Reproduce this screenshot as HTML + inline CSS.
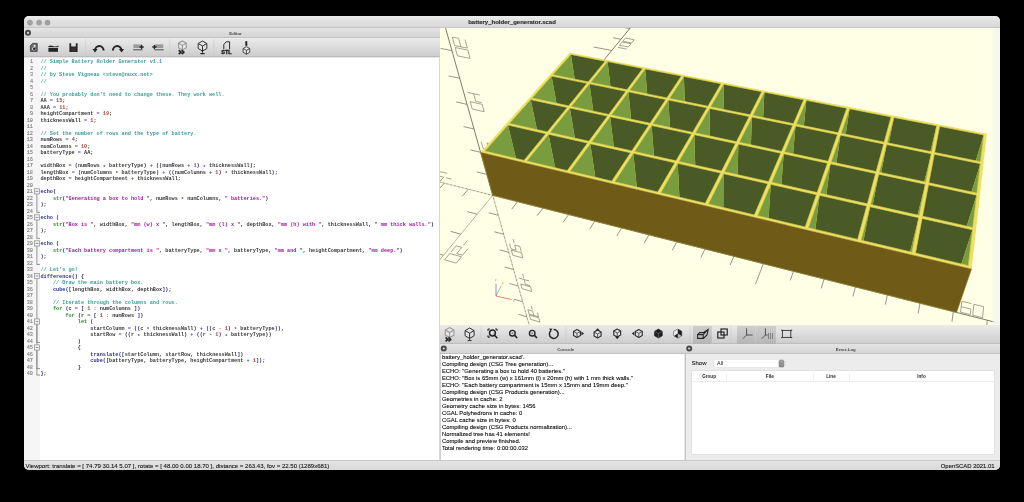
<!DOCTYPE html>
<html><head><meta charset="utf-8">
<style>
*{margin:0;padding:0;box-sizing:border-box}
html,body{width:1024px;height:502px;background:#000;overflow:hidden;font-family:"Liberation Sans",sans-serif}
#win{will-change:transform}
.abs{position:absolute}
#win{position:absolute;left:24px;top:16px;width:976px;height:453.5px;background:#e6e6e6;border-radius:5px;overflow:hidden}
#titlebar{position:absolute;left:0;top:0;width:976px;height:12px;background:linear-gradient(#ececec,#e2e2e2 35%,#d9d9d9);border-bottom:0.6px solid #c6c6c6}
.tl{position:absolute;top:3.6px;width:5.8px;height:5.8px;border-radius:50%;background:#c4c4c4;border:0.5px solid #ababab}
#title{position:absolute;left:0;top:0;width:976px;height:12px;line-height:12px;text-align:center;font-size:6px;font-weight:bold;color:#2a2a2a;-webkit-text-stroke:0.12px #2a2a2a}
.hdr{position:absolute;height:9.7px;background:linear-gradient(#e4e4e4,#d5d5d5);border-bottom:0.8px solid #c2c2c2}
.hdr .lbl{position:absolute;top:0.8px;left:7px;right:0;text-align:center;line-height:9.7px;font-size:4.3px;font-weight:bold;color:#4a4a4a}
.ring{position:absolute;width:5.4px;height:5.4px;border-radius:50%;border:1.5px solid #505050;background:#e0e0e0}
.tb{position:absolute;height:19.5px;background:linear-gradient(#ebebeb,#cdcdcd);border-bottom:0.6px solid #bdbdbd}
#code{position:absolute;left:0;top:41.7px;width:415px;height:402px;background:#fff;overflow:hidden}
#gut{position:absolute;left:0;top:0;width:15.5px;height:402px;background:#f6f6f6}
pre{font-family:"Liberation Mono",monospace;font-size:5.21px;line-height:6.506px;white-space:pre}
#nums{position:absolute;left:0;top:1.8px;width:9px;text-align:right;color:#7c7c7c;-webkit-text-stroke:0.1px #7c7c7c}
#src{position:absolute;left:16.4px;top:1.8px;color:#383838;font-weight:bold}
i{font-style:normal}
.c{color:#3c9e94}
.k{color:#2f2f9a}
.g{color:#2e8b2e}
.s{color:#a3199c}
.n{color:#a04a3c}
.o{color:#4646d8}
.a{position:relative;top:1.3px}
.b{color:#2a2a70}
#vp{position:absolute;left:416px;top:12px;width:560px;height:297.3px;background:#ffffe5;overflow:hidden}
#console{position:absolute;left:415.6px;top:337.7px;width:244.6px;height:106px;background:#fff;border-left:0.6px solid #d0d0d0}
#console pre{font-family:"Liberation Sans",sans-serif;font-size:5.9px;line-height:6.94px;color:#000;position:absolute;left:1.3px;top:0.7px;-webkit-text-stroke:0.08px #000}
#errlog{position:absolute;left:660.5px;top:337.7px;width:315.5px;height:106px;background:#ececec;border-left:0.5px solid #c4c4c4}
#status{position:absolute;left:0;top:443.5px;width:976px;height:10px;background:linear-gradient(#e3e3e3,#d9d9d9);border-top:0.5px solid #c8c8c8;font-size:6.05px;line-height:10px;color:#111;-webkit-text-stroke:0.1px #222}
</style></head><body>
<div id="win">
  <div id="titlebar">
    <div id="title">battery_holder_generator.scad</div>
  </div>
  <!-- editor -->
  <div class="hdr" style="left:0;top:12px;width:416px"><div class="lbl">Editor</div></div>
  <div class="tb" style="left:0;top:21.7px;width:416px"></div>
  <div id="code"><div id="gut"></div><pre id="nums">1
2
3
4
5
6
7
8
9
10
11
12
13
14
15
16
17
18
19
20
21
22
23
24
25
26
27
28
29
30
31
32
33
34
35
36
37
38
39
40
41
42
43
44
45
46
47
48
49</pre><pre id="src"><i class="c">// Simple Battery Holder Generator v1.1</i>
<i class="c">//</i>
<i class="c">// by Steve Vigneau &lt;steve@nuxx.net&gt;</i>
<i class="c">//</i>

<i class="c">// You probably don&#x27;t need to change these. They work well.</i>
AA <i class="o">=</i> <i class="n">15</i>;
AAA <i class="o">=</i> <i class="n">11</i>;
heightCompartment <i class="o">=</i> <i class="n">19</i>;
thicknessWall <i class="o">=</i> <i class="n">1</i>;

<i class="c">// Set the number of rows and the type of battery.</i>
numRows <i class="o">=</i> <i class="n">4</i>;
numColumns <i class="o">=</i> <i class="n">10</i>;
batteryType <i class="o">=</i> AA;

widthBox <i class="o">=</i> <i class="b">(</i>numRows <i class="o a">*</i> batteryType<i class="b">)</i> <i class="o">+</i> <i class="b">(</i><i class="b">(</i>numRows <i class="o">+</i> <i class="n">1</i><i class="b">)</i> <i class="o a">*</i> thicknessWall<i class="b">)</i>;
lengthBox <i class="o">=</i> <i class="b">(</i>numColumns <i class="o a">*</i> batteryType<i class="b">)</i> <i class="o">+</i> <i class="b">(</i><i class="b">(</i>numColumns <i class="o">+</i> <i class="n">1</i><i class="b">)</i> <i class="o a">*</i> thicknessWall<i class="b">)</i>;
depthBox <i class="o">=</i> heightCompartment <i class="o">+</i> thicknessWall;

<i class="k">echo</i><i class="b">(</i>
    <i class="g">str</i><i class="b">(</i><i class="s">&quot;Generating a box to hold &quot;</i>, numRows <i class="o a">*</i> numColumns, <i class="s">&quot; batteries.&quot;</i><i class="b">)</i>
<i class="b">)</i>;

<i class="k">echo</i> <i class="b">(</i>
    <i class="g">str</i><i class="b">(</i><i class="s">&quot;Box is &quot;</i>, widthBox, <i class="s">&quot;mm (w) x &quot;</i>, lengthBox, <i class="s">&quot;mm (l) x &quot;</i>, depthBox, <i class="s">&quot;mm (h) with &quot;</i>, thicknessWall, <i class="s">&quot; mm thick walls.&quot;</i><i class="b">)</i>
<i class="b">)</i>;

<i class="k">echo</i> <i class="b">(</i>
    <i class="g">str</i><i class="b">(</i><i class="s">&quot;Each battery compartment is &quot;</i>, batteryType, <i class="s">&quot;mm x &quot;</i>, batteryType, <i class="s">&quot;mm and &quot;</i>, heightCompartment, <i class="s">&quot;mm deep.&quot;</i><i class="b">)</i>
<i class="b">)</i>;

<i class="c">// Let&#x27;s go!</i>
<i class="k">difference</i><i class="b">(</i><i class="b">)</i> <i class="b">{</i>
    <i class="c">// Draw the main battery box.</i>
    <i class="k">cube</i><i class="b">(</i><i class="b">[</i>lengthBox, widthBox, depthBox<i class="b">]</i><i class="b">)</i>;

    <i class="c">// Iterate through the columns and rows.</i>
    <i class="g">for</i> <i class="b">(</i>c <i class="o">=</i> <i class="b">[</i> <i class="n">1</i> <i class="o">:</i> numColumns <i class="b">]</i><i class="b">)</i>
        <i class="g">for</i> <i class="b">(</i>r <i class="o">=</i> <i class="b">[</i> <i class="n">1</i> <i class="o">:</i> numRows <i class="b">]</i><i class="b">)</i>
            <i class="g">let</i> <i class="b">(</i>
                startColumn <i class="o">=</i> <i class="b">(</i><i class="b">(</i>c <i class="o a">*</i> thicknessWall<i class="b">)</i> <i class="o">+</i> <i class="b">(</i><i class="b">(</i>c <i class="o">-</i> <i class="n">1</i><i class="b">)</i> <i class="o a">*</i> batteryType<i class="b">)</i><i class="b">)</i>,
                startRow <i class="o">=</i> <i class="b">(</i><i class="b">(</i>r <i class="o a">*</i> thicknessWall<i class="b">)</i> <i class="o">+</i> <i class="b">(</i><i class="b">(</i>r <i class="o">-</i> <i class="n">1</i><i class="b">)</i> <i class="o a">*</i> batteryType<i class="b">)</i><i class="b">)</i>
            <i class="b">)</i>
            <i class="b">{</i>
                <i class="k">translate</i><i class="b">(</i><i class="b">[</i>startColumn, startRow, thicknessWall<i class="b">]</i><i class="b">)</i>
                <i class="k">cube</i><i class="b">(</i><i class="b">[</i>batteryType, batteryType, heightCompartment <i class="o">+</i> <i class="n">1</i><i class="b">]</i><i class="b">)</i>;
            <i class="b">}</i>
<i class="b">}</i>;</pre></div>
  <div class="abs" style="left:415px;top:41.7px;width:1px;height:402px;background:#d8d8d8"></div>
  <!-- viewport -->
  <div id="vp"><svg width="560" height="298" viewBox="440 28 560 298" style="position:absolute;left:0;top:0"><path d="M492.71 195.36 L1344.13 410.27 M492.71 195.36 L725.91 -88.48 M492.71 195.36 L34.28 -1431.75 " stroke="#5a5a50" stroke-width="0.8" fill="none"/><path d="M492.71 195.36 L-31.06 63.16 M492.71 195.36 L-849.40 1828.85 M492.71 195.36 L583.58 517.89 " stroke="#5a5a50" stroke-width="0.8" fill="none" stroke-dasharray="0.8 0.6"/><path d="M517.55 201.63 L511.67 209.19 M507.40 177.48 L497.79 175.13 M486.80 174.39 L476.75 171.93 M542.85 208.02 L537.19 215.72 M521.35 160.50 L511.93 158.27 M480.58 152.30 L470.29 149.85 M568.63 214.52 L563.20 222.37 M534.60 144.37 L525.38 142.25 M474.01 128.99 L463.46 126.57 M594.88 221.15 L589.70 229.14 M547.22 129.01 L538.17 126.99 M467.07 104.37 L456.26 101.98 M621.64 227.90 L616.71 236.05 M559.24 114.38 L550.37 112.45 M459.73 78.31 L448.63 75.96 M648.90 234.78 L644.23 243.09 M570.71 100.42 L562.00 98.58 M451.95 50.70 L440.55 48.39 M676.69 241.80 L672.30 250.27 M581.66 87.10 L573.12 85.34 M443.69 21.37 L431.98 19.12 M705.03 248.95 L700.92 257.58 M592.13 74.35 L583.74 72.67 M434.90 -9.82 L422.86 -12.00 M733.92 256.24 L730.11 265.05 M602.15 62.16 L593.91 60.55 M425.53 -43.07 L413.14 -45.17 M763.39 263.68 L755.41 284.20 M611.74 50.48 L593.61 47.02 M415.53 -78.59 L386.98 -83.05 M793.45 271.27 L790.28 280.43 M620.94 39.28 L612.99 37.80 M404.81 -116.60 L391.66 -118.48 M824.11 279.01 L821.29 288.36 M629.77 28.54 L621.96 27.12 M393.32 -157.40 L379.74 -159.13 M855.41 286.91 L852.94 296.46 M638.25 18.22 L630.57 16.86 M380.95 -201.29 L366.93 -202.85 M887.36 294.97 L885.25 304.72 M646.39 8.31 L638.84 6.99 M367.61 -248.64 L353.12 -249.99 M919.97 303.20 L918.25 313.16 M654.23 -1.23 L646.80 -2.49 M353.18 -299.87 L338.17 -300.99 M953.27 311.61 L951.96 321.78 M661.77 -10.41 L654.46 -11.63 M337.51 -355.49 L321.96 -356.32 M987.29 320.20 L986.40 330.58 M669.04 -19.26 L661.85 -20.43 M320.44 -416.09 L304.30 -416.56 M1022.04 328.97 L1021.59 339.58 M676.04 -27.78 L668.96 -28.91 M301.77 -482.35 L285.01 -482.41 M1057.55 337.93 L1057.55 348.78 M682.80 -36.00 L675.83 -37.09 M281.26 -555.12 L263.83 -554.68 M1093.84 347.09 L1094.95 372.46 M689.32 -43.94 L673.92 -46.30 M258.64 -635.41 L218.15 -633.07 M1130.95 356.46 L1131.93 367.80 M695.62 -51.60 L688.85 -52.62 M233.56 -724.44 L214.61 -722.65 M1168.89 366.03 L1170.40 377.63 M701.70 -59.01 L695.04 -59.99 M205.59 -823.72 L185.78 -821.02 M1207.70 375.83 L1209.76 387.70 M707.58 -66.17 L701.02 -67.12 M174.20 -935.13 L153.47 -931.30 M1247.41 385.85 L1250.04 398.00 M713.28 -73.10 L706.80 -74.02 M138.73 -1061.04 L116.98 -1055.81 M468.31 189.20 L462.00 196.49 M477.21 214.22 L467.19 211.61 M498.32 215.29 L488.73 212.80 M444.34 183.15 L437.84 190.31 M460.84 234.15 L450.59 231.39 M503.67 234.26 L494.29 231.76 M420.80 177.21 L414.11 184.24 M443.51 255.24 L433.04 252.31 M508.76 252.33 L499.58 249.83 M397.67 171.37 L390.79 178.28 M425.15 277.58 L414.44 274.48 M513.61 269.56 L504.64 267.07 M374.94 165.63 L367.89 172.42 M405.66 301.31 L394.70 298.01 M518.25 286.02 L509.46 283.54 M352.59 159.99 L345.38 166.67 M384.92 326.55 L373.70 323.04 M522.69 301.76 L514.07 299.28 M330.63 154.45 L323.25 161.01 M362.82 353.44 L351.34 349.70 M526.93 316.82 L518.49 314.34 M309.04 149.00 L301.51 155.45 M339.22 382.17 L327.46 378.16 M530.99 331.24 L522.72 328.77 M287.81 143.64 L280.13 149.98 M313.96 412.91 L301.90 408.62 M534.88 345.06 L526.77 342.60 M266.93 138.37 L249.11 152.58 M286.86 445.90 L259.21 435.60 M538.62 358.32 L520.77 352.84 M246.40 133.19 L238.44 139.32 M257.70 481.38 L245.03 476.42 M542.21 371.06 L534.40 368.63 M226.20 128.09 L218.11 134.12 M226.26 519.66 L213.25 514.30 M545.66 383.30 L537.99 380.88 M206.32 123.07 L198.11 129.01 M192.23 561.07 L178.88 555.27 M548.98 395.08 L541.44 392.67 M186.77 118.14 L178.43 123.98 M155.30 606.01 L141.60 599.71 M552.17 406.41 L544.77 404.02 M167.53 113.28 L159.08 119.03 M115.08 654.97 L101.01 648.09 M555.25 417.33 L547.97 414.95 M148.59 108.50 L140.03 114.16 M71.11 708.49 L56.66 700.96 M558.21 427.85 L551.06 425.49 M129.95 103.80 L121.28 109.36 M22.82 767.26 L7.99 758.97 M561.07 438.00 L554.04 435.65 M111.60 99.16 L102.83 104.65 M-30.43 832.08 L-45.66 822.92 M563.83 447.79 L556.91 445.46 M93.53 94.60 L84.66 100.00 M-89.47 903.93 L-105.08 893.75 M566.49 457.25 L559.69 454.94 M75.74 90.11 L55.34 102.21 M-155.29 984.04 L-190.93 958.68 M569.07 466.39 L554.04 461.25 M58.22 85.69 L49.17 90.92 M-229.11 1073.89 L-245.47 1061.09 M571.56 475.23 L564.97 472.95 M40.96 81.33 L31.82 86.49 M-312.52 1175.40 L-329.20 1160.90 M573.97 483.78 L567.48 481.52 M23.97 77.04 L14.74 82.12 M-407.48 1290.99 L-424.43 1274.41 M576.30 492.05 L569.91 489.81 M7.22 72.82 L-2.08 77.82 M-516.60 1423.80 L-533.71 1404.67 M578.56 500.07 L572.26 497.84 " stroke="#6a6a60" stroke-width="0.7" fill="none"/><path d="M545.84 197.87 L553.16 199.69 M553.16 199.69 L550.16 203.80 M550.16 203.80 L542.80 201.96 M542.80 201.96 L539.73 206.10 M539.73 206.10 L547.13 207.97 M537.34 161.33 L541.14 156.55 M541.14 156.55 L535.95 155.34 M535.95 155.34 L532.12 160.09 M532.12 160.09 L526.91 158.87 M526.91 158.87 L530.78 154.13 M494.63 151.14 L492.85 144.43 M492.85 144.43 L487.04 143.07 M487.04 143.07 L488.86 149.78 M488.86 149.78 L483.13 148.43 M483.13 148.43 L481.26 141.72 M548.92 208.42 L556.37 210.29 M556.37 210.29 L562.31 201.96 M562.31 201.96 L554.94 200.13 M554.94 200.13 L548.92 208.42 M531.70 152.99 L535.49 148.34 M535.49 148.34 L545.78 150.72 M545.78 150.72 L542.05 155.41 M542.05 155.41 L531.70 152.99 M485.40 156.61 L483.57 150.03 M483.57 150.03 L495.05 152.75 M495.05 152.75 L496.80 159.33 M496.80 159.33 L485.40 156.61 M597.15 210.62 L594.37 214.87 M594.37 214.87 L602.01 216.78 M562.47 129.76 L557.45 128.64 M557.45 128.64 L560.93 124.33 M481.76 102.57 L475.70 101.24 M475.70 101.24 L473.67 93.74 M604.75 212.51 L599.23 221.10 M565.91 125.43 L555.96 123.24 M479.78 95.06 L467.59 92.42 M601.09 221.57 L608.82 223.51 M608.82 223.51 L614.24 214.87 M614.24 214.87 L606.59 212.96 M606.59 212.96 L601.09 221.57 M556.79 122.21 L560.24 117.99 M560.24 117.99 L570.12 120.15 M570.12 120.15 L566.74 124.40 M566.74 124.40 L556.79 122.21 M472.20 109.06 L470.16 101.71 M470.16 101.71 L482.24 104.37 M482.24 104.37 L484.19 111.72 M484.19 111.72 L472.20 109.06 M658.29 225.81 L650.40 223.85 M650.40 223.85 L645.36 232.72 M645.36 232.72 L653.33 234.73 M653.33 234.73 L655.83 230.24 M655.83 230.24 L647.90 228.26 M588.42 97.17 L585.28 101.10 M585.28 101.10 L575.65 99.07 M575.65 99.07 L578.84 95.16 M578.84 95.16 L583.62 96.16 M583.62 96.16 L580.46 100.09 M465.10 39.65 L467.34 48.10 M467.34 48.10 L454.58 45.55 M454.58 45.55 L452.24 37.12 M452.24 37.12 L458.66 38.38 M458.66 38.38 L460.94 46.82 M655.26 235.22 L663.29 237.24 M663.29 237.24 L668.14 228.26 M668.14 228.26 L660.20 226.29 M660.20 226.29 L655.26 235.22 M579.60 94.23 L582.74 90.38 M582.74 90.38 L592.25 92.35 M592.25 92.35 L589.17 96.22 M589.17 96.22 L579.60 94.23 M457.43 55.82 L455.14 47.56 M455.14 47.56 L467.88 50.12 M467.88 50.12 L470.07 58.39 M470.07 58.39 L457.43 55.82 M701.26 246.81 L709.54 248.90 M709.54 248.90 L713.89 239.63 M713.89 239.63 L705.70 237.59 M705.70 237.59 L701.26 246.81 M596.81 73.12 L599.72 69.54 M599.72 69.54 L608.95 71.37 M608.95 71.37 L606.08 74.97 M606.08 74.97 L596.81 73.12 M437.55 -15.81 L434.90 -25.37 M434.90 -25.37 L448.52 -22.99 M448.52 -22.99 L451.05 -13.40 M451.05 -13.40 L437.55 -15.81 M703.49 242.17 L711.73 244.23 M601.44 74.04 L604.33 70.46 M444.29 -14.61 L441.69 -24.18 M711.55 249.40 L719.89 251.50 M719.89 251.50 L724.13 242.17 M724.13 242.17 L715.88 240.12 M715.88 240.12 L711.55 249.40 M600.42 68.69 L603.29 65.17 M603.29 65.17 L612.46 66.97 M612.46 66.97 L609.64 70.51 M609.64 70.51 L600.42 68.69 M440.78 -4.19 L438.19 -13.53 M438.19 -13.53 L451.66 -11.12 M451.66 -11.12 L454.14 -1.75 M454.14 -1.75 L440.78 -4.19 M764.53 262.75 L768.26 253.14 M617.79 47.37 L626.71 49.06 M416.37 -92.14 L430.78 -89.96 M770.07 264.15 L778.75 266.34 M778.75 266.34 L782.32 256.63 M782.32 256.63 L773.74 254.50 M773.74 254.50 L770.07 264.15 M619.50 45.28 L622.13 42.05 M622.13 42.05 L630.98 43.70 M630.98 43.70 L628.39 46.96 M628.39 46.96 L619.50 45.28 M421.87 -72.35 L418.91 -83.00 M418.91 -83.00 L433.21 -80.80 M433.21 -80.80 L436.04 -70.11 M436.04 -70.11 L421.87 -72.35 M780.85 266.87 L789.60 269.07 M789.60 269.07 L793.04 259.29 M793.04 259.29 L784.40 257.15 M784.40 257.15 L780.85 266.87 M622.77 41.27 L625.36 38.09 M625.36 38.09 L634.15 39.72 M634.15 39.72 L631.60 42.92 M631.60 42.92 L622.77 41.27 M425.46 -59.40 L422.57 -69.81 M422.57 -69.81 L436.71 -67.56 M436.71 -67.56 L439.48 -57.12 M439.48 -57.12 L425.46 -59.40 M825.21 278.04 L828.22 268.04 M635.48 25.68 L644.09 27.24 M393.87 -173.24 L409.22 -171.37 M833.92 269.45 L842.85 271.67 M842.85 271.67 L841.44 276.69 M841.44 276.69 L832.46 274.44 M832.46 274.44 L830.97 279.50 M830.97 279.50 L840.01 281.77 M645.63 25.29 L648.02 22.30 M648.02 22.30 L643.74 21.53 M643.74 21.53 L641.33 24.52 M641.33 24.52 L637.05 23.75 M637.05 23.75 L639.48 20.77 M415.29 -148.47 L412.02 -160.80 M412.02 -160.80 L404.39 -161.75 M404.39 -161.75 L407.72 -149.45 M407.72 -149.45 L400.20 -150.43 M400.20 -150.43 L396.80 -162.70 M842.20 282.33 L851.30 284.62 M851.30 284.62 L854.00 274.44 M854.00 274.44 L845.01 272.21 M845.01 272.21 L842.20 282.33 M640.06 20.06 L642.45 17.12 M642.45 17.12 L650.94 18.62 M650.94 18.62 L648.59 21.58 M648.59 21.58 L640.06 20.06 M404.33 -135.54 L401.01 -147.50 M401.01 -147.50 L416.06 -145.53 M416.06 -145.53 L419.24 -133.53 M419.24 -133.53 L404.33 -135.54 M888.39 293.97 L890.63 283.54 M651.79 5.66 L660.12 7.10 M367.76 -267.35 L384.18 -265.93 M896.56 285.02 L895.49 290.21 M895.49 290.21 L904.84 292.55 M661.54 5.31 L657.39 4.59 M657.39 4.59 L659.61 1.83 M391.26 -239.22 L383.17 -240.00 M383.17 -240.00 L379.28 -254.33 M905.86 287.33 L903.81 297.85 M663.75 2.54 L655.49 1.13 M387.45 -253.58 L371.17 -255.06 M906.10 298.43 L915.58 300.82 M915.58 300.82 L917.48 290.21 M917.48 290.21 L908.11 287.89 M908.11 287.89 L906.10 298.43 M656.03 0.47 L658.24 -2.25 M658.24 -2.25 L666.45 -0.86 M666.45 -0.86 L664.28 1.87 M664.28 1.87 L656.03 0.47 M379.93 -223.48 L376.08 -237.37 M376.08 -237.37 L392.16 -235.80 M392.16 -235.80 L395.86 -221.84 M395.86 -221.84 L379.93 -223.48 M954.24 310.56 L955.64 299.70 M666.89 -12.86 L674.95 -11.53 M337.09 -377.87 L354.75 -377.09 M971.51 303.64 L961.82 301.23 M961.82 301.23 L960.51 312.14 M960.51 312.14 L970.33 314.61 M970.33 314.61 L970.92 309.09 M970.92 309.09 L961.17 306.65 M678.32 -15.76 L676.27 -13.19 M676.27 -13.19 L668.24 -14.51 M668.24 -14.51 L670.32 -17.07 M670.32 -17.07 L674.31 -16.42 M674.31 -16.42 L672.25 -13.85 M358.61 -362.49 L363.10 -345.54 M363.10 -345.54 L345.79 -346.52 M345.79 -346.52 L341.12 -363.37 M341.12 -363.37 L349.84 -362.93 M349.84 -362.93 L354.42 -346.03 M972.71 315.21 L982.60 317.71 M982.60 317.71 L983.62 306.65 M983.62 306.65 L973.86 304.22 M973.86 304.22 L972.71 315.21 M670.82 -17.68 L672.88 -20.20 M672.88 -20.20 L680.82 -18.91 M680.82 -18.91 L678.81 -16.38 M678.81 -16.38 L670.82 -17.68 M351.44 -326.17 L346.90 -342.51 M346.90 -342.51 L364.17 -341.51 M364.17 -341.51 L368.52 -325.08 M368.52 -325.08 L351.44 -326.17 M1022.94 327.87 L1023.41 316.54 M680.91 -30.06 L688.71 -28.82 M300.56 -509.52 L319.64 -509.66 M1029.48 329.52 L1039.73 332.10 M1039.73 332.10 L1039.97 320.65 M1039.97 320.65 L1029.86 318.14 M1029.86 318.14 L1029.48 329.52 M682.16 -31.59 L684.10 -33.97 M684.10 -33.97 L691.84 -32.75 M691.84 -32.75 L689.94 -30.36 M689.94 -30.36 L682.16 -31.59 M310.98 -471.97 L305.39 -492.13 M305.39 -492.13 L324.28 -492.13 M324.28 -492.13 L329.66 -471.82 M329.66 -471.82 L310.98 -471.97 M1029.67 323.79 L1039.85 326.34 M686.05 -30.98 L687.96 -33.36 M320.29 -471.90 L314.80 -492.13 M1042.21 332.73 L1052.54 335.33 M1052.54 335.33 L1052.61 323.79 M1052.61 323.79 L1042.42 321.26 M1042.42 321.26 L1042.21 332.73 M684.56 -34.54 L686.47 -36.88 M686.47 -36.88 L694.18 -35.68 M694.18 -35.68 L692.30 -33.32 M692.30 -33.32 L684.56 -34.54 M317.72 -447.69 L312.31 -467.19 M312.31 -467.19 L330.94 -467.01 M330.94 -467.01 L336.14 -447.37 M336.14 -447.37 L317.72 -447.69 M1087.86 332.55 L1098.33 335.15 M1098.33 335.15 L1098.62 341.04 M1098.62 341.04 L1088.08 338.41 M1088.08 338.41 L1088.30 344.34 M1088.30 344.34 L1098.92 347.02 M700.44 -43.55 L702.23 -45.80 M702.23 -45.80 L698.45 -46.38 M698.45 -46.38 L696.64 -44.13 M696.64 -44.13 L692.85 -44.71 M692.85 -44.71 L694.68 -46.95 M281.12 -655.13 L274.31 -680.85 M274.31 -680.85 L263.84 -680.06 M263.84 -680.06 L270.79 -654.45 M270.79 -654.45 L260.53 -653.79 M260.53 -653.79 L253.46 -679.27 M1101.50 347.67 L1112.20 350.37 M1112.20 350.37 L1111.42 338.41 M1111.42 338.41 L1100.87 335.78 M1100.87 335.78 L1101.50 347.67 M695.12 -47.49 L696.93 -49.70 M696.93 -49.70 L704.44 -48.57 M704.44 -48.57 L702.66 -46.34 M702.66 -46.34 L695.12 -47.49 M269.02 -623.20 L262.21 -647.75 M262.21 -647.75 L282.73 -649.03 M282.73 -649.03 L289.29 -624.27 M289.29 -624.27 L269.02 -623.20 M1114.80 351.02 L1125.59 353.74 M1125.59 353.74 L1124.62 341.68 M1124.62 341.68 L1113.98 339.04 M1113.98 339.04 L1114.80 351.02 M697.36 -50.24 L699.14 -52.42 M699.14 -52.42 L706.61 -51.30 M706.61 -51.30 L704.86 -49.10 M704.86 -49.10 L697.36 -50.24 M277.20 -593.73 L270.63 -617.39 M270.63 -617.39 L290.85 -618.40 M290.85 -618.40 L297.17 -594.54 M297.17 -594.54 L277.20 -593.73 M1161.44 350.84 L1172.39 353.55 M1172.39 353.55 L1173.22 359.71 M1173.22 359.71 L1162.20 356.95 M1162.20 356.95 L1162.97 363.16 M1162.97 363.16 L1174.08 365.96 M712.46 -58.65 L714.13 -60.75 M714.13 -60.75 L710.46 -61.29 M710.46 -61.29 L708.77 -59.19 M708.77 -59.19 L705.10 -59.73 M705.10 -59.73 L706.80 -61.82 M229.40 -850.43 L220.87 -882.64 M220.87 -882.64 L209.41 -880.81 M209.41 -880.81 L218.09 -848.78 M218.09 -848.78 L206.88 -847.14 M206.88 -847.14 L198.05 -879.00 M1175.04 354.21 L1186.07 356.95 M1186.07 356.95 L1187.01 363.16 M1187.01 363.16 L1175.90 360.38 M1175.90 360.38 L1176.77 366.64 M1176.77 366.64 L1187.97 369.46 M714.53 -61.26 L716.19 -63.34 M716.19 -63.34 L712.54 -63.87 M712.54 -63.87 L710.87 -61.79 M710.87 -61.79 L707.21 -62.33 M707.21 -62.33 L708.90 -64.40 M239.60 -811.94 L231.42 -842.82 M231.42 -842.82 L220.15 -841.21 M220.15 -841.21 L228.47 -810.50 M228.47 -810.50 L217.45 -809.07 M217.45 -809.07 L208.97 -839.61 M1190.68 370.14 L1201.97 372.99 M1201.97 372.99 L1199.86 360.38 M1199.86 360.38 L1188.74 357.62 M1188.74 357.62 L1190.68 370.14 M709.31 -64.89 L710.97 -66.94 M710.97 -66.94 L718.22 -65.89 M718.22 -65.89 L716.59 -63.83 M716.59 -63.83 L709.31 -64.89 M227.59 -772.54 L219.45 -801.85 M219.45 -801.85 L241.53 -804.64 M241.53 -804.64 L249.37 -775.03 M249.37 -775.03 L227.59 -772.54 M1238.37 369.95 L1249.81 372.79 M1249.81 372.79 L1251.25 379.23 M1251.25 379.23 L1239.71 376.35 M1239.71 376.35 L1241.08 382.84 M1241.08 382.84 L1252.70 385.77 M723.69 -72.76 L725.26 -74.73 M725.26 -74.73 L721.70 -75.23 M721.70 -75.23 L720.11 -73.27 M720.11 -73.27 L716.54 -73.77 M716.54 -73.77 L718.14 -75.73 M163.85 -1097.99 L152.86 -1139.49 M152.86 -1139.49 L140.20 -1136.05 M140.20 -1136.05 L151.37 -1094.83 M151.37 -1094.83 L139.03 -1091.70 M139.03 -1091.70 L127.67 -1132.64 M1252.59 373.48 L1254.04 379.93 M1254.04 379.93 L1265.67 382.84 M725.64 -75.20 L722.08 -75.70 M722.08 -75.70 L723.64 -77.65 M176.91 -1048.65 L164.66 -1045.82 M164.66 -1045.82 L154.01 -1085.12 M1264.12 376.35 L1267.24 389.44 M727.19 -77.15 L720.10 -78.14 M166.44 -1088.21 L141.70 -1082.05 M1270.09 390.15 L1281.91 393.13 M1281.91 393.13 L1278.55 379.93 M1278.55 379.93 L1266.92 377.04 M1266.92 377.04 L1270.09 390.15 M720.48 -78.61 L722.05 -80.52 M722.05 -80.52 L729.09 -79.54 M729.09 -79.54 L727.56 -77.62 M727.56 -77.62 L720.48 -78.61 M165.43 -996.54 L155.09 -1033.81 M155.09 -1033.81 L179.38 -1039.33 M179.38 -1039.33 L189.38 -1001.59 M189.38 -1001.59 L165.43 -996.54 M451.52 179.12 L446.04 177.75 M467.39 240.44 L463.47 245.31 M514.19 243.20 L513.04 238.95 M447.19 173.36 L440.42 171.67 M440.42 171.67 L436.90 175.46 M436.90 175.46 L443.70 177.16 M443.70 177.16 L440.17 181.01 M440.17 181.01 L433.33 179.29 M467.55 248.99 L462.58 255.23 M462.58 255.23 L456.77 253.62 M456.77 253.62 L461.78 247.40 M461.78 247.40 L456.03 245.83 M456.03 245.83 L450.99 252.01 M521.23 251.60 L519.85 246.38 M519.85 246.38 L514.68 245.00 M514.68 245.00 L516.10 250.21 M516.10 250.21 L510.98 248.83 M510.98 248.83 L509.54 243.61 M431.69 178.88 L424.89 177.16 M424.89 177.16 L432.05 169.59 M432.05 169.59 L438.79 171.27 M438.79 171.27 L431.69 178.88 M449.76 253.52 L444.61 259.84 M444.61 259.84 L456.30 263.12 M456.30 263.12 L461.37 256.75 M461.37 256.75 L449.76 253.52 M512.75 255.20 L511.33 250.08 M511.33 250.08 L521.56 252.84 M521.56 252.84 L522.91 257.97 M522.91 257.97 L512.75 255.20 M404.99 167.48 L399.70 166.15 M431.77 284.65 L427.36 290.13 M523.61 277.91 L522.56 274.05 M401.14 161.91 L397.45 165.59 M397.45 165.59 L390.87 163.94 M431.50 294.27 L425.46 292.49 M425.46 292.49 L419.82 299.49 M530.25 285.68 L525.34 284.30 M525.34 284.30 L524.05 279.55 M394.59 160.29 L387.11 167.64 M425.90 301.30 L413.76 297.68 M529.00 280.93 L519.12 278.17 M385.52 167.24 L378.96 165.59 M378.96 165.59 L386.51 158.28 M386.51 158.28 L393.01 159.89 M393.01 159.89 L385.52 167.24 M412.38 299.38 L406.57 306.50 M406.57 306.50 L418.82 310.21 M418.82 310.21 L424.54 303.02 M424.54 303.02 L412.38 299.38 M522.05 288.73 L520.76 284.05 M520.76 284.05 L530.55 286.82 M530.55 286.82 L531.79 291.49 M531.79 291.49 L522.05 288.73 M360.05 156.23 L354.94 154.95 M391.57 334.55 L386.57 340.75 M532.19 309.58 L531.24 306.05 M350.31 149.28 L356.63 150.85 M356.63 150.85 L348.85 158.00 M348.85 158.00 L342.47 156.39 M342.47 156.39 L346.41 152.82 M346.41 152.82 L352.76 154.41 M384.40 353.44 L390.75 345.46 M390.75 345.46 L378.11 341.42 M378.11 341.42 L371.67 349.32 M371.67 349.32 L378.02 351.37 M378.02 351.37 L384.42 343.43 M537.34 312.45 L538.49 316.80 M538.49 316.80 L529.08 314.05 M529.08 314.05 L527.87 309.70 M527.87 309.70 L532.60 311.07 M532.60 311.07 L533.78 315.42 M340.93 156.00 L334.59 154.41 M334.59 154.41 L342.49 147.34 M342.49 147.34 L348.78 148.90 M348.78 148.90 L340.93 156.00 M370.10 351.25 L363.50 359.34 M363.50 359.34 L376.35 363.56 M376.35 363.56 L382.85 355.38 M382.85 355.38 L370.10 351.25 M530.55 319.36 L529.37 315.09 M529.37 315.09 L538.77 317.84 M538.77 317.84 L539.90 322.11 M539.90 322.11 L530.55 319.36 M316.62 145.36 L311.68 144.13 M345.86 391.30 L340.14 398.39 M540.06 338.58 L539.18 335.35 M305.49 147.07 L299.32 145.52 M299.32 145.52 L307.50 138.64 M307.50 138.64 L313.61 140.17 M313.61 140.17 L305.49 147.07 M331.05 399.15 L323.68 408.19 M323.68 408.19 L337.06 412.90 M337.06 412.90 L344.33 403.77 M344.33 403.77 L331.05 399.15 M537.00 342.58 L535.89 338.59 M535.89 338.59 L544.99 341.33 M544.99 341.33 L546.04 345.31 M546.04 345.31 L537.00 342.58 M309.57 143.60 L303.43 142.06 M337.68 401.45 L330.35 410.54 M541.51 343.95 L540.43 339.96 M297.84 145.14 L291.71 143.60 M291.71 143.60 L299.94 136.77 M299.94 136.77 L306.02 138.28 M306.02 138.28 L297.84 145.14 M321.88 410.40 L314.32 419.67 M314.32 419.67 L327.82 424.51 M327.82 424.51 L335.28 415.14 M335.28 415.14 L321.88 410.40 M538.35 347.47 L537.26 343.54 M537.26 343.54 L546.30 346.27 M546.30 346.27 L547.34 350.19 M547.34 350.19 L538.35 347.47 M274.62 134.85 L269.84 133.66 M293.39 456.42 L286.80 464.60 M547.29 365.25 L546.48 362.27 M259.98 135.60 L268.45 128.94 M271.90 471.71 L285.94 477.12 M543.67 366.64 L552.41 369.35 M256.16 134.64 L250.23 133.15 M250.23 133.15 L258.77 126.54 M258.77 126.54 L264.66 128.00 M264.66 128.00 L256.16 134.64 M266.39 478.47 L257.64 489.21 M257.64 489.21 L271.85 494.81 M271.85 494.81 L280.49 483.96 M280.49 483.96 L266.39 478.47 M545.53 373.35 L544.53 369.72 M544.53 369.72 L553.22 372.42 M553.22 372.42 L554.18 376.04 M554.18 376.04 L545.53 373.35 M248.81 132.79 L242.91 131.30 M242.91 131.30 L251.50 124.73 M251.50 124.73 L257.35 126.19 M257.35 126.19 L248.81 132.79 M255.50 491.83 L246.51 502.87 M246.51 502.87 L260.85 508.63 M260.85 508.63 L269.74 497.47 M269.74 497.47 L255.50 491.83 M546.77 377.79 L545.77 374.22 M545.77 374.22 L554.41 376.91 M554.41 376.91 L555.36 380.48 M555.36 380.48 L546.77 377.79 M233.99 124.69 L229.36 123.53 M232.58 531.91 L224.89 541.45 M553.96 389.85 L553.21 387.10 M219.53 125.41 L228.29 118.96 M208.28 549.76 L223.08 556.08 M550.44 391.05 L558.86 393.72 M224.62 118.05 L218.92 116.64 M218.92 116.64 L214.53 119.82 M214.53 119.82 L220.25 121.25 M220.25 121.25 L215.84 124.48 M215.84 124.48 L210.10 123.03 M216.71 564.08 L206.58 576.81 M206.58 576.81 L199.06 573.51 M199.06 573.51 L209.25 560.86 M209.25 560.86 L201.84 557.66 M201.84 557.66 L191.59 570.23 M560.50 399.91 L559.62 396.57 M559.62 396.57 L555.42 395.23 M555.42 395.23 L556.33 398.58 M556.33 398.58 L552.17 397.25 M552.17 397.25 L551.23 393.90 M208.72 122.69 L203.02 121.25 M203.02 121.25 L211.88 114.89 M211.88 114.89 L217.55 116.29 M217.55 116.29 L208.72 122.69 M189.08 573.31 L178.53 586.26 M178.53 586.26 L193.66 593.03 M193.66 593.03 L204.10 579.92 M204.10 579.92 L189.08 573.31 M553.31 401.36 L552.39 398.05 M552.39 398.05 L560.71 400.72 M560.71 400.72 L561.59 404.02 M561.59 404.02 L553.31 401.36 M194.65 114.84 L190.17 113.72 M161.24 620.46 L152.16 631.73 M560.13 412.62 L559.44 410.06 M180.38 115.55 L189.40 109.30 M133.45 641.56 L149.06 649.05 M556.71 413.64 L564.84 416.28 M185.85 108.42 L181.35 111.51 M181.35 111.51 L175.81 110.13 M141.51 658.55 L133.63 654.73 M133.63 654.73 L121.54 669.74 M566.36 422.03 L562.33 420.71 M562.33 420.71 L561.49 417.60 M180.33 107.05 L171.25 113.24 M129.47 673.66 L113.65 665.85 M565.54 418.92 L557.45 416.29 M169.91 112.91 L164.39 111.51 M164.39 111.51 L173.51 105.35 M173.51 105.35 L179.00 106.72 M179.00 106.72 L169.91 112.91 M110.67 669.51 L98.11 684.92 M98.11 684.92 L114.08 692.99 M114.08 692.99 L126.52 677.37 M126.52 677.37 L110.67 669.51 M559.37 423.21 L558.52 420.14 M558.52 420.14 L566.55 422.77 M566.55 422.77 L567.37 425.83 M567.37 425.83 L559.37 423.21 M156.55 105.31 L152.21 104.22 M76.39 725.78 L65.49 739.31 M565.86 433.74 L565.22 431.37 M142.46 105.99 L151.72 99.94 M44.15 751.12 L60.63 760.13 M562.53 434.62 L570.38 437.23 M142.93 97.75 L148.28 99.08 M148.28 99.08 L139.00 105.12 M139.00 105.12 L133.61 103.76 M133.61 103.76 L138.29 100.74 M138.29 100.74 L143.66 102.08 M36.99 789.83 L51.53 771.57 M51.53 771.57 L34.96 762.40 M34.96 762.40 L20.29 780.39 M20.29 780.39 L28.61 785.09 M28.61 785.09 L43.21 766.97 M571.03 439.68 L571.80 442.57 M571.80 442.57 L564.02 439.97 M564.02 439.97 L563.22 437.08 M563.22 437.08 L567.12 438.38 M567.12 438.38 L567.90 441.27 M132.32 103.43 L126.96 102.08 M126.96 102.08 L136.32 96.11 M136.32 96.11 L141.64 97.43 M141.64 97.43 L132.32 103.43 M16.69 784.81 L1.49 803.46 M1.49 803.46 L18.35 813.25 M18.35 813.25 L33.42 794.32 M33.42 794.32 L16.69 784.81 M565.00 443.52 L564.21 440.67 M564.21 440.67 L571.98 443.26 M571.98 443.26 L572.73 446.11 M572.73 446.11 L565.00 443.52 M119.63 96.07 L115.42 95.02 M-26.21 853.14 L-39.52 869.66 M571.19 453.40 L570.59 451.19 M105.72 96.73 L115.20 90.86 M-64.27 884.13 L-46.88 895.18 M567.95 454.15 L575.54 456.72 M102.36 95.88 L97.14 94.57 M97.14 94.57 L106.68 88.74 M106.68 88.74 L111.86 90.03 M111.86 90.03 L102.36 95.88 M-75.54 897.96 L-93.58 920.09 M-93.58 920.09 L-75.97 931.73 M-75.97 931.73 L-58.07 909.23 M-58.07 909.23 L-75.54 897.96 M569.34 459.14 L568.59 456.44 M568.59 456.44 L576.15 459.00 M576.15 459.00 L576.86 461.70 M576.86 461.70 L569.34 459.14 M107.13 92.94 L101.93 91.64 M-66.84 903.57 L-84.81 925.88 M573.09 460.42 L572.36 457.72 M95.88 94.25 L90.69 92.94 M90.69 92.94 L100.27 87.15 M100.27 87.15 L105.43 88.43 M105.43 88.43 L95.88 94.25 M-98.02 925.53 L-116.79 948.55 M-116.79 948.55 L-99.01 960.67 M-99.01 960.67 L-80.38 937.26 M-80.38 937.26 L-98.02 925.53 M570.26 462.45 L569.52 459.79 M569.52 459.79 L577.03 462.34 M577.03 462.34 L577.74 465.00 M577.74 465.00 L570.26 462.45 M83.83 87.11 L79.75 86.09 M-152.79 1010.26 L-169.41 1030.90 M576.17 471.74 L575.61 469.68 M82.83 82.82 L77.77 81.56 M77.77 81.56 L72.94 84.39 M72.94 84.39 L78.01 85.66 M78.01 85.66 L73.15 88.52 M73.15 88.52 L68.06 87.24 M-167.50 1046.70 L-189.13 1073.87 M-189.13 1073.87 L-198.34 1066.80 M-198.34 1066.80 L-176.65 1039.88 M-176.65 1039.88 L-185.71 1033.11 M-185.71 1033.11 L-207.46 1059.80 M580.76 476.43 L580.09 473.88 M580.09 473.88 L576.40 472.62 M576.40 472.62 L577.09 475.16 M577.09 475.16 L573.43 473.90 M573.43 473.90 L572.73 471.35 M66.84 86.93 L61.78 85.66 M61.78 85.66 L71.51 80.01 M71.51 80.01 L76.55 81.26 M76.55 81.26 L66.84 86.93 M-212.83 1066.38 L-235.55 1094.25 M-235.55 1094.25 L-217.06 1108.95 M-217.06 1108.95 L-194.46 1080.57 M-194.46 1080.57 L-212.83 1066.38 M574.30 477.04 L573.60 474.52 M573.60 474.52 L580.93 477.04 M580.93 477.04 L581.59 479.56 M581.59 479.56 L574.30 477.04 M60.56 85.35 L55.52 84.08 M55.52 84.08 L65.30 78.46 M65.30 78.46 L70.30 79.71 M70.30 79.71 L60.56 85.35 M-241.15 1101.13 L-264.90 1130.26 M-264.90 1130.26 L-246.27 1145.65 M-246.27 1145.65 L-222.64 1115.96 M-222.64 1115.96 L-241.15 1101.13 M575.16 480.13 L574.47 477.64 M574.47 477.64 L581.75 480.16 M581.75 480.16 L582.41 482.64 M582.41 482.64 L575.16 480.13 M49.11 78.42 L45.15 77.43 M-312.86 1208.95 L-334.21 1235.45 M580.82 488.89 L580.29 486.96 M48.37 74.26 L43.46 73.04 M43.46 73.04 L38.54 75.78 M38.54 75.78 L43.46 77.01 M43.46 77.01 L38.51 79.79 M38.51 79.79 L33.57 78.55 M-333.98 1255.82 L-361.95 1290.95 M-361.95 1290.95 L-371.54 1281.80 M-371.54 1281.80 L-343.52 1247.02 M-343.52 1247.02 L-352.97 1238.31 M-352.97 1238.31 L-381.03 1272.73 M585.24 493.34 L584.61 490.96 M584.61 490.96 L581.04 489.71 M581.04 489.71 L581.69 492.09 M581.69 492.09 L578.14 490.85 M578.14 490.85 L577.47 488.46 M42.28 72.74 L37.40 71.53 M37.40 71.53 L32.46 74.26 M32.46 74.26 L37.35 75.48 M37.35 75.48 L32.38 78.25 M32.38 78.25 L27.47 77.01 M-368.87 1299.65 L-398.28 1336.59 M-398.28 1336.59 L-407.92 1326.96 M-407.92 1326.96 L-378.47 1290.40 M-378.47 1290.40 L-387.98 1281.25 M-387.98 1281.25 L-417.47 1317.43 M586.02 496.27 L585.39 493.91 M585.39 493.91 L581.84 492.67 M581.84 492.67 L582.48 495.03 M582.48 495.03 L578.95 493.79 M578.95 493.79 L578.30 491.43 M26.29 76.71 L21.40 75.48 M21.40 75.48 L31.36 70.03 M31.36 70.03 L36.22 71.24 M36.22 71.24 L26.29 76.71 M-424.77 1326.38 L-455.79 1364.44 M-455.79 1364.44 L-436.52 1384.62 M-436.52 1384.62 L-405.56 1345.73 M-405.56 1345.73 L-424.77 1326.38 M579.76 496.69 L579.11 494.36 M579.11 494.36 L586.17 496.83 M586.17 496.83 L586.78 499.16 M586.78 499.16 L579.76 496.69 M15.41 69.99 L11.57 69.03 M-521.73 1468.22 L-550.15 1503.50 M585.17 504.96 L584.68 503.15 M14.93 65.95 L10.16 64.76 M10.16 64.76 L5.15 67.43 M5.15 67.43 L9.93 68.62 M9.93 68.62 L4.89 71.32 M4.89 71.32 L0.10 70.11 M-552.83 1530.73 L-590.42 1577.94 M-590.42 1577.94 L-600.18 1565.61 M-600.18 1565.61 L-562.60 1518.95 M-562.60 1518.95 L-572.25 1507.31 M-572.25 1507.31 L-609.83 1553.42 M589.44 509.19 L588.85 506.96 M588.85 506.96 L585.38 505.73 M585.38 505.73 L585.99 507.97 M585.99 507.97 L582.55 506.74 M582.55 506.74 L581.92 504.50 M9.02 64.48 L4.00 67.14 M4.00 67.14 L-0.75 65.95 M-599.75 1589.67 L-609.52 1577.19 M-609.52 1577.19 L-649.34 1626.63 M590.17 511.94 L586.74 510.72 M586.74 510.72 L586.13 508.50 M4.27 63.30 L-5.82 68.62 M-639.59 1639.70 L-658.97 1613.71 M589.58 509.73 L582.70 507.28 M-6.97 68.33 L-11.71 67.14 M-11.71 67.14 L-1.59 61.84 M-1.59 61.84 L3.13 63.02 M3.13 63.02 L-6.97 68.33 M-668.87 1625.85 L-711.10 1677.66 M-711.10 1677.66 L-691.78 1705.26 M-691.78 1705.26 L-649.49 1652.14 M-649.49 1652.14 L-668.87 1625.85 M584.07 512.22 L583.46 510.03 M583.46 510.03 L590.31 512.47 M590.31 512.47 L590.89 514.66 M590.89 514.66 L584.07 512.22 " stroke="#6a6a60" stroke-width="0.6" fill="none" stroke-linejoin="round"/><polygon points="480.58,152.30 971.64,269.00 986.85,133.80 569.77,52.69" fill="#eee060"/><g><polygon points="507.93,125.10 516.00,158.50 524.05,160.41 545.92,133.67" fill="#4a5a26"/><polygon points="507.93,125.10 484.77,151.10 516.00,158.50" fill="#789c3e"/><polygon points="530.64,99.60 536.94,129.63 547.31,131.96 567.34,107.46" fill="#4a5a26"/><polygon points="530.64,99.60 509.40,123.45 536.94,129.63" fill="#789c3e"/><polygon points="551.55,76.11 556.49,103.30 568.62,105.89 587.05,83.36" fill="#4a5a26"/><polygon points="551.55,76.11 532.00,98.07 556.49,103.30" fill="#789c3e"/><polygon points="570.87,54.42 574.76,79.18 588.22,81.92 605.23,61.13" fill="#4a5a26"/><polygon points="570.87,54.42 552.81,74.71 574.76,79.18" fill="#789c3e"/><polygon points="548.49,134.25 555.10,167.76 567.23,170.63 587.62,143.06" fill="#4a5a26"/><polygon points="548.49,134.25 526.71,161.04 555.10,167.76" fill="#789c3e"/><polygon points="569.82,107.99 574.88,138.15 588.92,141.31 607.58,116.08" fill="#4a5a26"/><polygon points="569.82,107.99 549.88,132.54 574.88,138.15" fill="#789c3e"/><polygon points="589.44,83.85 593.32,111.17 608.77,114.47 625.92,91.30" fill="#4a5a26"/><polygon points="589.44,83.85 571.10,106.42 593.32,111.17" fill="#789c3e"/><polygon points="607.55,61.58 610.51,86.46 627.01,89.82 642.81,68.46" fill="#4a5a26"/><polygon points="607.55,61.58 590.62,82.41 610.51,86.46" fill="#789c3e"/><polygon points="590.27,143.66 595.34,177.29 611.78,181.18 630.60,152.75" fill="#4a5a26"/><polygon points="590.27,143.66 569.97,171.28 595.34,177.29" fill="#789c3e"/><polygon points="610.14,116.63 613.88,146.91 631.80,150.94 649.00,124.95" fill="#4a5a26"/><polygon points="610.14,116.63 591.56,141.90 613.88,146.91" fill="#789c3e"/><polygon points="628.38,91.80 631.13,119.24 650.09,123.30 665.88,99.46" fill="#4a5a26"/><polygon points="628.38,91.80 611.32,115.01 631.13,119.24" fill="#789c3e"/><polygon points="645.20,68.92 647.19,93.92 666.88,97.93 681.41,75.98" fill="#4a5a26"/><polygon points="645.20,68.92 629.47,90.32 647.19,93.92" fill="#789c3e"/><polygon points="633.33,153.36 636.76,187.10 657.77,192.07 674.91,162.73" fill="#4a5a26"/><polygon points="633.33,153.36 614.61,181.85 636.76,187.10" fill="#789c3e"/><polygon points="651.63,125.52 653.98,155.92 676.00,160.87 691.64,134.09" fill="#4a5a26"/><polygon points="651.63,125.52 634.52,151.55 653.98,155.92" fill="#789c3e"/><polygon points="668.41,99.97 669.97,127.54 692.64,132.38 706.97,107.85" fill="#4a5a26"/><polygon points="668.41,99.97 652.72,123.86 669.97,127.54" fill="#789c3e"/><polygon points="683.86,76.46 684.83,101.59 707.88,106.28 721.06,83.72" fill="#4a5a26"/><polygon points="683.86,76.46 669.41,98.45 684.83,101.59" fill="#789c3e"/><polygon points="677.72,163.37 679.41,197.20 705.27,203.32 720.61,173.03" fill="#4a5a26"/><polygon points="677.72,163.37 660.69,192.77 679.41,197.20" fill="#789c3e"/><polygon points="694.35,134.67 695.23,165.19 721.58,171.11 735.56,143.50" fill="#4a5a26"/><polygon points="694.35,134.67 678.80,161.50 695.23,165.19" fill="#789c3e"/><polygon points="709.58,108.38 709.88,136.06 736.45,141.74 749.25,116.48" fill="#4a5a26"/><polygon points="709.58,108.38 695.34,132.96 709.88,136.06" fill="#789c3e"/><polygon points="723.58,84.21 723.46,109.45 750.06,114.87 761.81,91.66" fill="#4a5a26"/><polygon points="723.58,84.21 710.49,106.81 723.46,109.45" fill="#789c3e"/><polygon points="723.51,173.69 723.34,207.61 754.36,214.95 767.77,183.66" fill="#4a5a26"/><polygon points="723.51,173.69 708.29,204.04 723.34,207.61" fill="#789c3e"/><polygon points="738.35,144.10 737.67,174.72 768.63,181.67 780.83,153.20" fill="#4a5a26"/><polygon points="738.35,144.10 724.48,171.76 737.67,174.72" fill="#789c3e"/><polygon points="751.93,117.03 750.90,144.83 781.61,151.38 792.76,125.36" fill="#4a5a26"/><polygon points="751.93,117.03 739.24,142.33 750.90,144.83" fill="#789c3e"/><polygon points="764.39,92.17 763.14,117.53 793.47,123.70 803.70,99.83" fill="#4a5a26"/><polygon points="764.39,92.17 752.74,115.41 763.14,117.53" fill="#789c3e"/><polygon points="770.77,184.33 768.63,218.33 805.13,226.98 816.47,194.63" fill="#4a5a26"/><polygon points="770.77,184.33 757.49,215.69 768.63,218.33" fill="#789c3e"/><polygon points="783.70,153.81 781.37,184.53 817.19,192.58 827.50,163.20" fill="#4a5a26"/><polygon points="783.70,153.81 771.62,182.34 781.37,184.53" fill="#789c3e"/><polygon points="795.52,125.93 793.09,153.84 828.15,161.33 837.56,134.51" fill="#4a5a26"/><polygon points="795.52,125.93 784.47,152.00 793.09,153.84" fill="#789c3e"/><polygon points="806.36,100.35 803.89,125.83 838.16,132.80 846.78,108.24" fill="#4a5a26"/><polygon points="806.36,100.35 796.22,124.26 803.89,125.83" fill="#789c3e"/><polygon points="819.57,195.33 815.33,229.39 857.65,239.41 866.78,205.97" fill="#4a5a26"/><polygon points="819.57,195.33 808.36,227.74 815.33,229.39" fill="#789c3e"/><polygon points="830.46,163.83 826.37,194.64 867.36,203.85 875.64,173.51" fill="#4a5a26"/><polygon points="830.46,163.83 820.28,193.27 826.37,194.64" fill="#789c3e"/><polygon points="840.40,135.09 836.48,163.10 876.16,171.58 883.71,143.94" fill="#4a5a26"/><polygon points="840.40,135.09 831.11,161.96 836.48,163.10" fill="#789c3e"/><polygon points="849.51,108.77 845.77,134.35 884.19,142.17 891.09,116.88" fill="#4a5a26"/><polygon points="849.51,108.77 841.00,133.38 845.77,134.35" fill="#789c3e"/><polygon points="918.77,217.69 869.98,206.69 863.50,240.80 910.07,251.83" fill="#4a5a26"/><polygon points="869.98,206.69 860.99,240.21 863.50,240.80" fill="#789c3e"/><polygon points="910.07,251.83 912.02,252.29 918.77,217.69" fill="#789c3e"/><polygon points="925.32,184.15 878.70,174.16 872.74,205.06 917.50,215.11" fill="#4a5a26"/><polygon points="878.70,174.16 870.55,204.56 872.74,205.06" fill="#789c3e"/><polygon points="917.50,215.11 919.20,215.49 925.32,184.15" fill="#789c3e"/><polygon points="931.27,153.65 886.64,144.53 881.14,172.64 924.21,181.84" fill="#4a5a26"/><polygon points="886.64,144.53 879.21,172.23 881.14,172.64" fill="#789c3e"/><polygon points="924.21,181.84 925.70,182.16 931.27,153.65" fill="#789c3e"/><polygon points="936.71,125.78 893.91,117.43 888.83,143.12 930.30,151.56" fill="#4a5a26"/><polygon points="893.91,117.43 887.11,142.77 888.83,143.12" fill="#789c3e"/><polygon points="930.30,151.56 931.62,151.83 936.71,125.78" fill="#789c3e"/><polygon points="972.54,229.80 922.08,218.43 915.48,253.11 961.31,263.97" fill="#4a5a26"/><polygon points="961.31,263.97 968.34,265.63 972.54,229.80" fill="#789c3e"/><polygon points="976.61,195.14 928.47,184.83 922.50,216.23 966.70,226.16" fill="#4a5a26"/><polygon points="966.70,226.16 972.81,227.53 976.61,195.14" fill="#789c3e"/><polygon points="980.31,163.66 934.29,154.26 928.85,182.83 971.48,191.94" fill="#4a5a26"/><polygon points="971.48,191.94 976.85,193.09 980.31,163.66" fill="#789c3e"/><polygon points="983.68,134.94 939.60,126.34 934.64,152.44 975.77,160.82" fill="#4a5a26"/><polygon points="975.77,160.82 980.53,161.79 983.68,134.94" fill="#789c3e"/></g><g fill="none" stroke="#d6cc50" stroke-width="0.7"><polygon points="484.77,151.10 524.05,160.41 545.92,133.67 507.93,125.10"/><polygon points="509.40,123.45 547.31,131.96 567.34,107.46 530.64,99.60"/><polygon points="532.00,98.07 568.62,105.89 587.05,83.36 551.55,76.11"/><polygon points="552.81,74.71 588.22,81.92 605.23,61.13 570.87,54.42"/><polygon points="526.71,161.04 567.23,170.63 587.62,143.06 548.49,134.25"/><polygon points="549.88,132.54 588.92,141.31 607.58,116.08 569.82,107.99"/><polygon points="571.10,106.42 608.77,114.47 625.92,91.30 589.44,83.85"/><polygon points="590.62,82.41 627.01,89.82 642.81,68.46 607.55,61.58"/><polygon points="569.97,171.28 611.78,181.18 630.60,152.75 590.27,143.66"/><polygon points="591.56,141.90 631.80,150.94 649.00,124.95 610.14,116.63"/><polygon points="611.32,115.01 650.09,123.30 665.88,99.46 628.38,91.80"/><polygon points="629.47,90.32 666.88,97.93 681.41,75.98 645.20,68.92"/><polygon points="614.61,181.85 657.77,192.07 674.91,162.73 633.33,153.36"/><polygon points="634.52,151.55 676.00,160.87 691.64,134.09 651.63,125.52"/><polygon points="652.72,123.86 692.64,132.38 706.97,107.85 668.41,99.97"/><polygon points="669.41,98.45 707.88,106.28 721.06,83.72 683.86,76.46"/><polygon points="660.69,192.77 705.27,203.32 720.61,173.03 677.72,163.37"/><polygon points="678.80,161.50 721.58,171.11 735.56,143.50 694.35,134.67"/><polygon points="695.34,132.96 736.45,141.74 749.25,116.48 709.58,108.38"/><polygon points="710.49,106.81 750.06,114.87 761.81,91.66 723.58,84.21"/><polygon points="708.29,204.04 754.36,214.95 767.77,183.66 723.51,173.69"/><polygon points="724.48,171.76 768.63,181.67 780.83,153.20 738.35,144.10"/><polygon points="739.24,142.33 781.61,151.38 792.76,125.36 751.93,117.03"/><polygon points="752.74,115.41 793.47,123.70 803.70,99.83 764.39,92.17"/><polygon points="757.49,215.69 805.13,226.98 816.47,194.63 770.77,184.33"/><polygon points="771.62,182.34 817.19,192.58 827.50,163.20 783.70,153.81"/><polygon points="784.47,152.00 828.15,161.33 837.56,134.51 795.52,125.93"/><polygon points="796.22,124.26 838.16,132.80 846.78,108.24 806.36,100.35"/><polygon points="808.36,227.74 857.65,239.41 866.78,205.97 819.57,195.33"/><polygon points="820.28,193.27 867.36,203.85 875.64,173.51 830.46,163.83"/><polygon points="831.11,161.96 876.16,171.58 883.71,143.94 840.40,135.09"/><polygon points="841.00,133.38 884.19,142.17 891.09,116.88 849.51,108.77"/><polygon points="860.99,240.21 912.02,252.29 918.77,217.69 869.98,206.69"/><polygon points="870.55,204.56 919.20,215.49 925.32,184.15 878.70,174.16"/><polygon points="879.21,172.23 925.70,182.16 931.27,153.65 886.64,144.53"/><polygon points="887.11,142.77 931.62,151.83 936.71,125.78 893.91,117.43"/><polygon points="915.48,253.11 968.34,265.63 972.54,229.80 922.08,218.43"/><polygon points="922.50,216.23 972.81,227.53 976.61,195.14 928.47,184.83"/><polygon points="928.85,182.83 976.85,193.09 980.31,163.66 934.29,154.26"/><polygon points="934.64,152.44 980.53,161.79 983.68,134.94 939.60,126.34"/></g><polygon points="492.71,195.36 956.64,312.46 971.64,269.00 480.58,152.30" fill="#705a18" stroke="#a89430" stroke-width="0.5"/><g stroke-width="0.8" fill="none"><line x1="496" y1="296" x2="511.5" y2="299.5" stroke="#e06060"/><line x1="496" y1="296" x2="501.3" y2="285.6" stroke="#70c070"/><line x1="496" y1="296" x2="496" y2="283.8" stroke="#7070e0"/></g><g font-family="Liberation Sans" font-size="3" fill="#888"><text x="513" y="302">x</text><text x="502" y="284">y</text><text x="495" y="281">z</text></g></svg><div class="abs" style="left:551px;top:0;width:9px;height:297.3px;background:linear-gradient(90deg,rgba(255,255,229,0),rgba(244,248,238,0.9) 45%,rgba(246,248,240,0.95))"></div></div>
  <div class="tb" style="left:416px;top:309.3px;width:560px;height:18.4px"></div>
  <div class="hdr" style="left:416px;top:328px;width:244.5px"><div class="lbl">Console</div></div>
  <div class="hdr" style="left:660.5px;top:328px;width:315.5px"><div class="lbl">Error-Log</div></div>
  <div id="console"><pre>battery_holder_generator.scad'.
Compiling design (CSG Tree generation)...
ECHO: "Generating a box to hold 40 batteries."
ECHO: "Box is 65mm (w) x 161mm (l) x 20mm (h) with 1 mm thick walls."
ECHO: "Each battery compartment is 15mm x 15mm and 19mm deep."
Compiling design (CSG Products generation)...
Geometries in cache: 2
Geometry cache size in bytes: 1456
CGAL Polyhedrons in cache: 0
CGAL cache size in bytes: 0
Compiling design (CSG Products normalization)...
Normalized tree has 41 elements!
Compile and preview finished.
Total rendering time: 0:00:00.032</pre></div>
  <div id="errlog"><div class="abs" style="left:6px;top:5.6px;font-size:6px;line-height:8px;color:#222;-webkit-text-stroke:0.1px #222">Show</div>
<div class="abs" style="left:28.4px;top:5.9px;width:70.8px;height:7.6px;background:#fff;border-radius:1px;box-shadow:0 0 0 0.3px #dadada"></div>
<div class="abs" style="left:31.6px;top:5.6px;font-size:5.4px;line-height:8px;color:#222">All</div>
<div class="abs" style="left:93.4px;top:6.2px;width:5.6px;height:7px;background:linear-gradient(#9a9a9a,#7e7e7e);border-radius:1.2px;box-shadow:0 0 0 0.3px #777"></div>
<svg class="abs" style="left:93.4px;top:6.2px" width="6" height="7"><path d="M1.6 2.8 l1.2 -1.3 l1.2 1.3 M1.6 4.2 l1.2 1.3 l1.2 -1.3" fill="none" stroke="#d0d0d0" stroke-width="0.5"/></svg>
<div class="abs" style="left:6.3px;top:17.8px;width:302.2px;height:83px;background:#fff;box-shadow:0 0 0 0.5px #d6d6d6"></div>
<div class="abs" style="left:6.3px;top:17.8px;width:302.2px;height:10.2px;border-bottom:0.5px solid #ececec"></div>
<div class="abs" style="left:40.9px;top:19.3px;width:0.6px;height:7.4px;background:#efefef"></div>
<div class="abs" style="left:127.5px;top:19.3px;width:0.6px;height:7.4px;background:#efefef"></div>
<div class="abs" style="left:163.4px;top:19.3px;width:0.6px;height:7.4px;background:#efefef"></div>
<div class="abs" style="left:6.3px;top:18.6px;width:34.6px;text-align:center;font-size:4.6px;line-height:9px;color:#2a2a2a;font-weight:bold">Group</div>
<div class="abs" style="left:41px;top:18.6px;width:86.6px;text-align:center;font-size:4.6px;line-height:9px;color:#2a2a2a;font-weight:bold">File</div>
<div class="abs" style="left:127.6px;top:18.6px;width:35.8px;text-align:center;font-size:4.6px;line-height:9px;color:#2a2a2a;font-weight:bold">Line</div>
<div class="abs" style="left:163.5px;top:18.6px;width:145px;text-align:center;font-size:4.6px;line-height:9px;color:#2a2a2a;font-weight:bold">Info</div>
</div>
  <div id="status"><span class="abs" style="left:1.5px;top:0">Viewport: translate = [ 74.79 30.14 5.07 ], rotate = [ 48.00 0.00 18.70 ], distance = 263.43, fov = 22.50 (1289x681)</span><span class="abs" style="right:5.5px;top:0.3px;font-size:5.9px;-webkit-text-stroke:0.12px #222">OpenSCAD 2021.01</span></div>
</div>
<svg width="1024" height="502" style="position:absolute;left:0;top:0"><circle cx="30.0" cy="22.6" r="2.65" fill="#a2a2a2" stroke="#949494" stroke-width="0.4"/><circle cx="39.1" cy="22.6" r="2.65" fill="#a2a2a2" stroke="#949494" stroke-width="0.4"/><circle cx="47.5" cy="22.6" r="2.65" fill="#a2a2a2" stroke="#949494" stroke-width="0.4"/><circle cx="28.0" cy="32.8" r="2.05" fill="none" stroke="#474747" stroke-width="1.9"/><circle cx="443.8" cy="348.5" r="2.05" fill="none" stroke="#474747" stroke-width="1.9"/><circle cx="689.2" cy="348.5" r="2.05" fill="none" stroke="#474747" stroke-width="1.9"/><line x1="36.9" y1="193.97" x2="36.9" y2="212.39" stroke="#8a8a8a" stroke-width="0.9"/><line x1="36.5" y1="212.39" x2="40" y2="212.39" stroke="#8a8a8a" stroke-width="0.9"/><line x1="36.9" y1="219.99" x2="36.9" y2="238.41" stroke="#8a8a8a" stroke-width="0.9"/><line x1="36.5" y1="238.41" x2="40" y2="238.41" stroke="#8a8a8a" stroke-width="0.9"/><line x1="36.9" y1="246.02" x2="36.9" y2="264.44" stroke="#8a8a8a" stroke-width="0.9"/><line x1="36.5" y1="264.44" x2="40" y2="264.44" stroke="#8a8a8a" stroke-width="0.9"/><line x1="36.9" y1="278.55" x2="36.9" y2="375.04" stroke="#8a8a8a" stroke-width="0.9"/><line x1="36.5" y1="375.04" x2="40" y2="375.04" stroke="#8a8a8a" stroke-width="0.9"/><line x1="36.9" y1="324.09" x2="36.9" y2="342.51" stroke="#8a8a8a" stroke-width="0.9"/><line x1="36.5" y1="342.51" x2="40" y2="342.51" stroke="#8a8a8a" stroke-width="0.9"/><line x1="36.9" y1="350.11" x2="36.9" y2="368.53" stroke="#8a8a8a" stroke-width="0.9"/><line x1="36.5" y1="368.53" x2="40" y2="368.53" stroke="#8a8a8a" stroke-width="0.9"/><rect x="34.4" y="188.77" width="5.2" height="5.2" fill="#f4f4f4" stroke="#8a8a8a" stroke-width="0.7"/><line x1="35.6" y1="191.37" x2="38.4" y2="191.37" stroke="#6a6a6a" stroke-width="0.7"/><rect x="34.4" y="214.79" width="5.2" height="5.2" fill="#f4f4f4" stroke="#8a8a8a" stroke-width="0.7"/><line x1="35.6" y1="217.39" x2="38.4" y2="217.39" stroke="#6a6a6a" stroke-width="0.7"/><rect x="34.4" y="240.82" width="5.2" height="5.2" fill="#f4f4f4" stroke="#8a8a8a" stroke-width="0.7"/><line x1="35.6" y1="243.42" x2="38.4" y2="243.42" stroke="#6a6a6a" stroke-width="0.7"/><rect x="34.4" y="273.35" width="5.2" height="5.2" fill="#f4f4f4" stroke="#8a8a8a" stroke-width="0.7"/><line x1="35.6" y1="275.95" x2="38.4" y2="275.95" stroke="#6a6a6a" stroke-width="0.7"/><rect x="34.4" y="318.89" width="5.2" height="5.2" fill="#f4f4f4" stroke="#8a8a8a" stroke-width="0.7"/><line x1="35.6" y1="321.49" x2="38.4" y2="321.49" stroke="#6a6a6a" stroke-width="0.7"/><rect x="34.4" y="344.91" width="5.2" height="5.2" fill="#f4f4f4" stroke="#8a8a8a" stroke-width="0.7"/><line x1="35.6" y1="347.51" x2="38.4" y2="347.51" stroke="#6a6a6a" stroke-width="0.7"/><path d="M32.6 43.4 h4.6 v8 h-6.8 v-5.8 z" fill="#6a6a6a" stroke="#3a3a3a" stroke-width="0.8"/><circle cx="34.6" cy="45.8" r="1.1" fill="#e8e8e8"/><circle cx="33.9" cy="48.8" r="1.7" fill="#f2f2f2"/><circle cx="34.2" cy="48.8" r="1.2" fill="#1a1a1a"/><path d="M48.2 46.6 q2 -1.8 4.6 -0.6 q2.6 1.2 6 -0.6 l-0.6 1.6 h-10 z" fill="#262626"/><path d="M48.4 47.8 h9.6 v4 h-9.6 z" fill="#262626"/><path d="M69.4 43.2 h1.8 v3.4 h4.6 v-3.4 h1.8 v8.8 h-8.2 z" fill="#262626"/><rect x="71.4" y="48.4" width="4.2" height="2" fill="#4a2a2a"/><rect x="71.4" y="50.6" width="4.2" height="1" fill="#2e4a2e"/><line x1="85.6" y1="39" x2="85.6" y2="56.5" stroke="#c9c9c9" stroke-width="0.6"/><line x1="169.8" y1="39" x2="169.8" y2="56.5" stroke="#c9c9c9" stroke-width="0.6"/><line x1="213.7" y1="39" x2="213.7" y2="56.5" stroke="#c9c9c9" stroke-width="0.6"/><path d="M95 50.6 A4.3 4.6 0 0 1 103.6 50.6" fill="none" stroke="#262626" stroke-width="2"/><path d="M92.4 49 l5.2 0 l-2.6 3.4 z" fill="#262626"/><path d="M121.5 50.6 A4.3 4.6 0 0 0 112.9 50.6" fill="none" stroke="#262626" stroke-width="2"/><path d="M124.1 49 l-5.2 0 l2.6 3.4 z" fill="#262626"/><rect x="133.4" y="44.4" width="8.6" height="3.6" fill="#9a9a9a"/><line x1="133.1" y1="49.8" x2="142.5" y2="49.8" stroke="#3a3a3a" stroke-width="0.9"/><path d="M139.5 47.0 h4.2 M141.6 44.9 v4.2" stroke="#262626" stroke-width="1.3"/><rect x="154.6" y="44.4" width="8.6" height="3.6" fill="#9a9a9a"/><line x1="154.3" y1="49.8" x2="163.7" y2="49.8" stroke="#3a3a3a" stroke-width="0.9"/><path d="M152.3 47.0 h4.2 M154.4 44.9 v4.2" stroke="#262626" stroke-width="1.3"/><polygon points="182.40,40.90 186.30,43.15 186.30,47.65 182.40,49.90 178.50,47.65 178.50,43.15" fill="#e6e6e6" stroke="#9a9a9a" stroke-width="1.1"/><path d="M178.50 43.15 L182.40 45.40 L186.30 43.15 M182.40 45.40 L182.40 49.90" fill="none" stroke="#9a9a9a" stroke-width="1.1"/><path d="M178.8 50.2 l2.1 2.0 l-2.1 2.0 M181.7 50.2 l2.1 2.0 l-2.1 2.0" fill="none" stroke="#262626" stroke-width="1.7"/><polygon points="202.50,41.00 206.83,43.50 206.83,48.50 202.50,51.00 198.17,48.50 198.17,43.50" fill="#e2e2e2" stroke="#303030" stroke-width="1.0"/><path d="M198.17 43.50 L202.50 46.00 L206.83 43.50 M202.50 46.00 L202.50 51.00" fill="none" stroke="#303030" stroke-width="1.0"/><path d="M202.5 50 v2.8 M200.4 53.6 h4.2" stroke="#262626" stroke-width="1.1"/><path d="M223.8 49.2 v-4.6 l2.4 -2.8 h3.4 v7.4" fill="none" stroke="#2a2a2a" stroke-width="1.0"/><text x="226.5" y="53.9" font-size="5.6" font-weight="bold" text-anchor="middle" fill="#1a1a1a" stroke="#1a1a1a" stroke-width="0.35" font-family="Liberation Sans">STL</text><path d="M246.3 41.2 v4.6" stroke="#262626" stroke-width="2.0"/><polygon points="246.40,46.60 249.69,48.50 249.69,52.30 246.40,54.20 243.11,52.30 243.11,48.50" fill="#e8e8e8" stroke="#3a3a3a" stroke-width="0.9"/><path d="M243.11 48.50 L246.40 50.40 L249.69 48.50 M246.40 50.40 L246.40 54.20" fill="none" stroke="#3a3a3a" stroke-width="0.9"/><polygon points="449.60,327.60 453.93,330.10 453.93,335.10 449.60,337.60 445.27,335.10 445.27,330.10" fill="#e6e6e6" stroke="#9a9a9a" stroke-width="1.1"/><path d="M445.27 330.10 L449.60 332.60 L453.93 330.10 M449.60 332.60 L449.60 337.60" fill="none" stroke="#9a9a9a" stroke-width="1.1"/><path d="M445.6 337.4 l2.1 2.0 l-2.1 2.0 M448.5 337.4 l2.1 2.0 l-2.1 2.0" fill="none" stroke="#262626" stroke-width="1.7"/><polygon points="469.60,328.00 474.10,330.60 474.10,335.80 469.60,338.40 465.10,335.80 465.10,330.60" fill="#e2e2e2" stroke="#303030" stroke-width="1.0"/><path d="M465.10 330.60 L469.60 333.20 L474.10 330.60 M469.60 333.20 L469.60 338.40" fill="none" stroke="#303030" stroke-width="1.0"/><path d="M469.6 337.5 v2.5 M467.6 340.6 h4" stroke="#262626" stroke-width="0.9"/><line x1="481.0" y1="326.5" x2="481.0" y2="343" stroke="#c9c9c9" stroke-width="0.6"/><line x1="566.0" y1="326.5" x2="566.0" y2="343" stroke="#c9c9c9" stroke-width="0.6"/><line x1="690.0" y1="326.5" x2="690.0" y2="343" stroke="#c9c9c9" stroke-width="0.6"/><line x1="731.0" y1="326.5" x2="731.0" y2="343" stroke="#c9c9c9" stroke-width="0.6"/><circle cx="492.4" cy="333" r="2.9" fill="none" stroke="#262626" stroke-width="1.5"/><path d="M488 329 l1.8 0 M488 329 l0 1.8 M497 329 l-1.8 0 M497 329 l0 1.8 M488 337.2 l1.8 0 M488 337.2 l0 -1.8" stroke="#262626" stroke-width="1.2"/><path d="M494.6 335.4 l2.8 2.8" stroke="#262626" stroke-width="1.6"/><circle cx="512.4" cy="333.2" r="2.8" fill="none" stroke="#262626" stroke-width="1.4"/><path d="M514.4 335.2 l2.8 2.8" stroke="#262626" stroke-width="1.7"/><circle cx="512.4" cy="333.2" r="0.9" fill="#777"/><circle cx="532.2" cy="333.2" r="2.8" fill="none" stroke="#262626" stroke-width="1.4"/><path d="M534.2 335.2 l2.8 2.8" stroke="#262626" stroke-width="1.7"/><circle cx="532.2" cy="333.2" r="0.9" fill="#777"/><path d="M551 330.6 A4.4 4.4 0 1 0 553.6 329.6" fill="none" stroke="#262626" stroke-width="1.5"/><path d="M549.2 328.6 l3.4 0.2 l-2 2.8 z" fill="#262626"/><polygon points="577.00,329.40 580.46,331.40 580.46,335.40 577.00,337.40 573.54,335.40 573.54,331.40" fill="#e4e4e4" stroke="#333" stroke-width="1.2" stroke-linejoin="round"/><path d="M573.54 331.40 L577.00 333.40 L580.46 331.40 M577.00 333.40 L577.00 337.40" fill="none" stroke="#333" stroke-width="0.8"/><path d="M581.4 331.4 l2.6 2 l-2.6 2 z" fill="#262626"/><polygon points="597.60,330.00 601.06,332.00 601.06,336.00 597.60,338.00 594.14,336.00 594.14,332.00" fill="#e4e4e4" stroke="#333" stroke-width="1.2" stroke-linejoin="round"/><path d="M594.14 332.00 L597.60 334.00 L601.06 332.00 M597.60 334.00 L597.60 338.00" fill="none" stroke="#333" stroke-width="0.8"/><path d="M595.4 330.6 l2.2 -2.4 l2.2 2.4 z" fill="#262626"/><polygon points="617.20,329.00 620.66,331.00 620.66,335.00 617.20,337.00 613.74,335.00 613.74,331.00" fill="#e4e4e4" stroke="#333" stroke-width="1.2" stroke-linejoin="round"/><path d="M613.74 331.00 L617.20 333.00 L620.66 331.00 M617.20 333.00 L617.20 337.00" fill="none" stroke="#333" stroke-width="0.8"/><path d="M615.0 336.6 l2.2 2.6 l2.2 -2.6 z" fill="#262626"/><polygon points="638.80,329.40 642.26,331.40 642.26,335.40 638.80,337.40 635.34,335.40 635.34,331.40" fill="#e4e4e4" stroke="#333" stroke-width="1.2" stroke-linejoin="round"/><path d="M635.34 331.40 L638.80 333.40 L642.26 331.40 M638.80 333.40 L638.80 337.40" fill="none" stroke="#333" stroke-width="0.8"/><path d="M634.4 331.4 l-2.6 2 l2.6 2 z" fill="#262626"/><polygon points="658.40,329.10 662.30,331.35 662.30,335.85 658.40,338.10 654.50,335.85 654.50,331.35" fill="#1e1e1e" stroke="#1e1e1e" stroke-width="0.6" stroke-linejoin="round"/><path d="M654.50 331.35 L658.4 333.6 L662.30 331.35 M658.4 333.6 V338.10" fill="none" stroke="#8a8a8a" stroke-width="0.5"/><polygon points="677.80,329.10 681.70,331.35 681.70,335.85 677.80,338.10 673.90,335.85 673.90,331.35" fill="#1e1e1e" stroke="#1e1e1e" stroke-width="0.6" stroke-linejoin="round"/><path d="M673.9 331.4 L677.8 329.1 L677.8 333.6 L673.9 335.9 Z" fill="#e8e8e8"/><path d="M677.8 333.6 L681.7 335.9 L677.8 338.1 Z" fill="#bdbdbd"/><rect x="693.0" y="326" width="18.8" height="17.4" fill="#000" fill-opacity="0.11"/><rect x="737.0" y="326" width="18.7" height="17.4" fill="#000" fill-opacity="0.11"/><rect x="756.0" y="326" width="20.0" height="17.4" fill="#000" fill-opacity="0.11"/><path d="M697.6 334.6 l2 -2 h3.6 l5 -3.2 l-1.2 5.6 l-3.6 3.4 h-5.8 z M697.6 334.6 h5.6 v4 M703.2 334.6 l4.6 -5" fill="none" stroke="#262626" stroke-width="1.1"/><rect x="717.8" y="332" width="6.2" height="6" fill="none" stroke="#262626" stroke-width="1.2"/><rect x="721" y="329" width="6.2" height="6" fill="none" stroke="#262626" stroke-width="1.2"/><path d="M746.6 328.4 v6.6 l-3.6 3.6 M746.6 335 h6" fill="none" stroke="#444" stroke-width="0.9"/><path d="M765.4 328.4 v6.6 l-3.6 3.6 M765.4 335 h2.2" fill="none" stroke="#444" stroke-width="0.9"/><path d="M768.5 333 v6 M770.5 333 v6 M772.5 333 v6" stroke="#555" stroke-width="0.6"/><rect x="782.4" y="330.4" width="8.4" height="7.0" fill="none" stroke="#333" stroke-width="0.9"/><path d="M781.2 330.2 h1.2 M781.2 337.6 h1.2 M791 330.2 h1.2 M791 337.6 h1.2" stroke="#262626" stroke-width="1"/></svg>
</body></html>
